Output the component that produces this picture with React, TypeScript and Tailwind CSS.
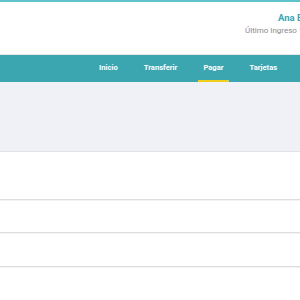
export default function App() {
  const nav = ['Inicio', 'Transferir', 'Pagar', 'Tarjetas', 'Inversiones']
  const active = 'Pagar'

  return (
    <div className="w-[300px] h-[300px] overflow-hidden bg-white font-['Roboto',sans-serif]">
      <div className="w-[380px]">
        {/* Header */}
        <header className="h-[55px] border-t-2 border-[#5ec3cb] bg-white flex pl-[245px] pt-[11px] border-b border-b-[#e6e6e6]">
          <div className="whitespace-nowrap leading-none">
            <p className="text-[9.5px] font-bold text-[#3aa7b2] pl-[33px]">Ana Beltrán</p>
            <p className="text-[8px] text-[#8a8a8a] mt-[4px]">Último Ingreso 12/03 10:24</p>
          </div>
        </header>

        {/* Nav */}
        <nav className="h-[27px] bg-[#3ba5b0] flex items-stretch pl-[94px] gap-[16px]">
          {nav.map((item) => (
            <div
              key={item}
              className={`px-[5px] flex items-center text-[7.6px] font-bold text-white border-b-2 ${
                item === active ? 'border-[#f2cf1d]' : 'border-transparent'
              }`}
            >
              {item}
            </div>
          ))}
        </nav>

        {/* Summary band */}
        <section className="h-[70px] bg-[#f0f1f6] border-b border-[#e2e2e8]" />

        {/* Rows */}
        <div className="h-[48px] border-b border-[#dedede] shadow-[0_1px_0_#f3f3f3]" />
        <div className="h-[33px] border-b border-[#dedede] shadow-[0_1px_0_#f3f3f3]" />
        <div className="h-[34px] border-b border-[#dedede] shadow-[0_1px_0_#f3f3f3]" />
        <div className="h-[40px]" />
      </div>
    </div>
  )
}
